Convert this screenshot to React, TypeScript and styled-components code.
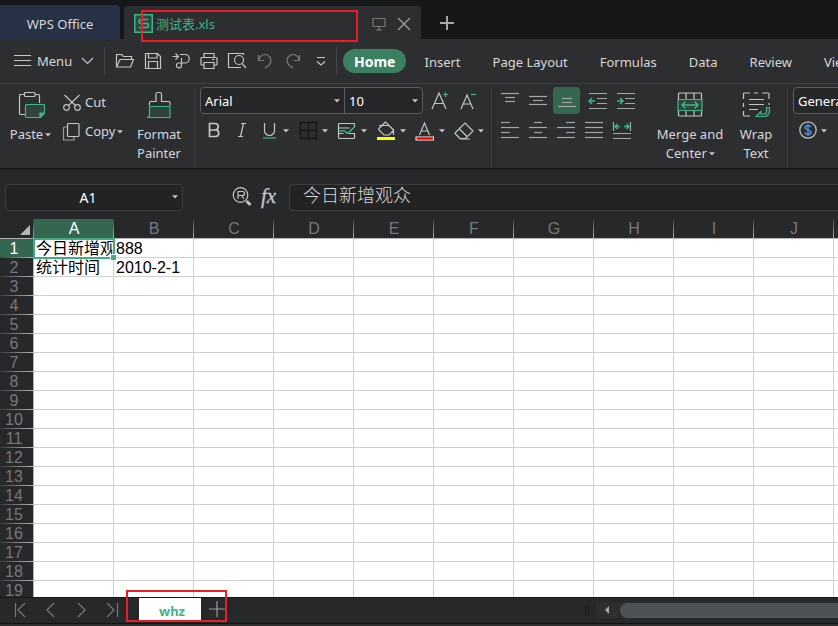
import React from "react";
import styled, { createGlobalStyle, css } from "styled-components";

const ui = `"Noto Sans", "Noto Sans CJK SC", sans-serif`;
const sheetFont = `"Liberation Sans", "Noto Sans CJK SC", sans-serif`;
const green = "#3fb488";
const ink = "#c4c5c6";
const dim = "#77787a";

const GlobalStyle = createGlobalStyle`
  *, *::before, *::after { box-sizing: border-box; }
  body { margin: 0; background: #2d2e30; font-family: ${ui}; font-size: 13px; color: #d6d7d8; overflow: hidden; }
  button, input, select { font: inherit; color: inherit; }
  svg { display: block; flex: none; fill: none; }
`;

const Page = styled.main`
  display: flex;
  flex-direction: column;
  height: 100vh;
  overflow: hidden;
`;

const buttonReset = css`
  border: 0;
  padding: 0;
  margin: 0;
  background: none;
  white-space: nowrap;
  cursor: pointer;
`;

/* ---------- title bar ---------- */
const TitleBar = styled.header`
  display: flex;
  align-items: flex-end;
  gap: 4px;
  flex: none;
  height: 39px;
  background: #161719;
`;
const OfficeTab = styled.button`
  ${buttonReset}
  width: 120px;
  height: 34px;
  border-radius: 0 4px 0 0;
  background: #263145;
  padding-top: 4px;
`;
const DocumentTab = styled.div`
  position: relative;
  display: flex;
  align-items: center;
  width: 297px;
  height: 33px;
  padding: 2px 10px 0;
  border-radius: 4px 4px 0 0;
  background: #2d2e30;
`;
const DocumentName = styled.button`
  ${buttonReset}
  display: flex;
  align-items: center;
  gap: 3px;
  flex: 1;
  color: ${green};
  font-size: 13px;
  line-height: 20px;
`;
const TabAction = styled.button`
  ${buttonReset}
  margin-left: 11px;
`;
const NewTab = styled.button`
  ${buttonReset}
  align-self: center;
  margin: 6px 0 0 15px;
`;
const Marker = styled.span<{ $inset: string }>`
  position: absolute;
  inset: ${(p) => p.$inset};
  border: 2px solid #ee1c24;
  pointer-events: none;
`;

/* ---------- menu bar ---------- */
const MenuBar = styled.nav`
  display: flex;
  align-items: center;
  flex: none;
  height: 45px;
  border-bottom: 1px solid #3f4042;
  white-space: nowrap;
`;
const MenuButton = styled.button`
  ${buttonReset}
  display: flex;
  align-items: center;
  gap: 6px;
  flex: none;
  width: 104px;
  padding-left: 13px;
`;
const Rule = styled.span<{ $tall?: boolean }>`
  flex: none;
  width: 1px;
  height: ${(p) => (p.$tall ? 80 : 28)}px;
  background: ${(p) => (p.$tall ? "#3a3b3d" : "#454648")};
`;
const QuickTools = styled.div`
  display: flex;
  flex: none;
  width: 231px;
  padding-left: 6px;
`;
const QuickButton = styled.button<{ $muted?: boolean }>`
  ${buttonReset}
  display: grid;
  place-items: center;
  width: 28px;
  height: 28px;
`;
const MenuTab = styled.button<{ $active?: boolean }>`
  ${buttonReset}
  flex: none;
  height: 24px;
  padding: 2px 16px 0;
  border-radius: 12px;
  ${(p) =>
    p.$active &&
    css`
      margin: 0 2px 0 6px;
      padding: 0 11px;
      background: #3c8064;
      color: #fff;
      font-size: 14px;
      font-weight: 700;
    `}
`;

/* ---------- ribbon ---------- */
const Ribbon = styled.section`
  display: flex;
  flex: none;
  height: 86px;
  padding-top: 3px;
  border-bottom: 2px solid #18191b;
  line-height: 19px;
`;
const Group = styled.div<{ $width?: number }>`
  display: flex;
  flex: none;
  width: ${(p) => (p.$width ? p.$width + "px" : "auto")};
`;
const LargeButton = styled.button<{ $width: number }>`
  ${buttonReset}
  display: flex;
  flex-direction: column;
  align-items: center;
  flex: none;
  width: ${(p) => p.$width}px;
  padding-top: 4px;
  line-height: 19px;
  gap: 6px;
`;
const Stack = styled.div<{ $width?: number }>`
  display: flex;
  flex-direction: column;
  flex: none;
  gap: 3px;
  width: ${(p) => (p.$width ? p.$width + "px" : "auto")};
`;
const SmallButton = styled.button`
  ${buttonReset}
  display: flex;
  align-items: center;
  gap: 3px;
  height: 26px;
  padding-top: 5px;
`;
const WithCaret = styled.span<{ $indent?: number }>`
  display: flex;
  align-items: center;
  gap: 1px;
  padding-left: ${(p) => p.$indent ?? 0}px;
`;
const Row = styled.div<{ $gap?: number; $pad?: number }>`
  display: flex;
  align-items: center;
  gap: ${(p) => p.$gap ?? 0}px;
  height: 27px;
  padding-left: ${(p) => p.$pad ?? 0}px;
`;
const SelectPair = styled.div`
  display: flex;
  width: 223px;
  height: 27px;
  border: 1px solid #5b5c5e;
  border-radius: 4px;
  background: #262729;
`;
const SelectBox = styled.label<{ $width: number; $divided?: boolean; $framed?: boolean }>`
  display: grid;
  grid-template-areas: "box";
  align-items: center;
  flex: none;
  width: ${(p) => p.$width}px;
  height: 100%;
  color: #fff;
  ${(p) => p.$divided && "border-right: 1px solid #5b5c5e;"}
  ${(p) =>
    p.$framed &&
    css`
      height: 27px;
      border: 1px solid #5b5c5e;
      border-radius: 4px;
      background: #262729;
    `}
  > svg {
    grid-area: box;
    justify-self: end;
    margin-right: 3px;
    pointer-events: none;
  }
`;
const Select = styled.select`
  grid-area: box;
  appearance: none;
  width: 100%;
  height: 100%;
  padding: 2px 4px 0;
  border: 0;
  background: transparent;
  option { color: #000; }
`;
const Tool = styled.button<{ $active?: boolean; $after?: number }>`
  ${buttonReset}
  display: grid;
  place-items: center;
  flex: none;
  width: 27px;
  height: 27px;
  margin-right: ${(p) => p.$after ?? 1}px;
  border-radius: 4px;
  background: ${(p) => (p.$active ? "#356650" : "none")};
`;
const SplitTool = styled.button`
  ${buttonReset}
  display: flex;
  align-items: center;
  flex: none;
  gap: 3px;
  width: 31px;
`;

/* ---------- formula bar ---------- */
const FormulaBar = styled.section`
  display: flex;
  align-items: center;
  flex: none;
  height: 49px;
  padding: 4px 0 0 5px;
  background: #27282a;
  border-top: 1px solid #2c2d2f;
`;
const NameBox = styled.div`
  display: grid;
  grid-template-areas: "box";
  align-items: center;
  flex: none;
  width: 178px;
  height: 27px;
  border: 1px solid #3c3d3f;
  border-radius: 4px;
  background: #232323;
  > svg { grid-area: box; justify-self: end; margin-right: 3px; }
`;
const NameInput = styled.input`
  grid-area: box;
  width: 100%;
  padding: 0 12px 0 0;
  border: 0;
  background: transparent;
  color: #fff;
  font-family: ${ui};
  font-size: 14px;
  text-align: center;
`;
const FormulaTools = styled.div`
  display: flex;
  align-items: center;
  gap: 5px;
  width: 106px;
  padding-left: 45px;
`;
const FunctionButton = styled.button`
  ${buttonReset}
  padding-bottom: 3px;
  font: italic 21px/24px "Liberation Serif", serif;
  color: ${ink};
  -webkit-text-stroke: 0.3px ${ink};
`;
const FormulaInput = styled.input`
  flex: 1;
  min-width: 0;
  height: 27px;
  padding: 0 13px 7px;
  border: 1px solid #3c3d3f;
  border-right: 0;
  border-radius: 4px 0 0 4px;
  background: #232323;
  color: #d8d8d8;
  font-family: "Noto Sans CJK SC", sans-serif;
  font-size: 18px;
  font-weight: 300;
  line-height: 20px;
`;

/* ---------- grid ---------- */
const SheetArea = styled.section`
  flex: 1;
  min-height: 0;
  overflow: hidden;
  background: #fff;
`;
const Sheet = styled.table`
  width: 914px;
  table-layout: fixed;
  border-collapse: separate;
  border-spacing: 0;
  font-family: ${sheetFont};
  font-size: 16px;
  line-height: 18px;
  color: #000;
`;
const RowHeadCol = styled.col`
  width: 34px;
`;
const Corner = styled.td`
  height: 20px;
  padding: 0;
  background: linear-gradient(#3a3b3d, #a5a5a5) right / 1px 100% no-repeat #27282a;
  border-bottom: 1px solid #b5b5b5;
  > svg { margin: 2px 4px 0 auto; }
`;
const ColumnHead = styled.th<{ $active?: boolean }>`
  height: 20px;
  padding: 1px 0 0;
  line-height: 18px;
  border-bottom: 1px solid #b5b5b5;
  background: linear-gradient(#3a3b3d, #b5b5b5) right / 1px 100% no-repeat
    ${(p) => (p.$active ? "#356650" : "#27282a")};
  color: ${(p) => (p.$active ? "#fff" : "#77787a")};
  font-weight: 400;
`;
const RowHead = styled.th<{ $active?: boolean }>`
  height: 19px;
  padding: 0 5px 0 0;
  border-right: 1px solid #b5b5b5;
  background: linear-gradient(90deg, #3a3b3d, #b5b5b5) bottom / 100% 1px no-repeat
    ${(p) => (p.$active ? "#356650" : "#27282a")};
  color: ${(p) => (p.$active ? "#fff" : "#77787a")};
  font-weight: 400;
`;
const Cell = styled.td`
  position: relative;
  height: 19px;
  padding: 0;
  border-right: 1px solid #d0d0d0;
  border-bottom: 1px solid #d0d0d0;
`;
const CellText = styled.span`
  display: block;
  height: 18px;
  padding-left: 2px;
  line-height: 20px;
  overflow: hidden;
  white-space: nowrap;
`;
const Selection = styled.span`
  position: absolute;
  inset: -1px -2px -2px -1px;
  border: 2px solid #40ad83;
  z-index: 1;
  &::after {
    content: "";
    position: absolute;
    right: -3px;
    bottom: -3px;
    width: 5px;
    height: 5px;
    background: #40ad83;
    outline: 1px solid #fff;
  }
`;

/* ---------- sheet bar ---------- */
const SheetBar = styled.footer`
  display: flex;
  align-items: stretch;
  flex: none;
  height: 27px;
  border-top: 1px solid #151617;
  border-bottom: 1px solid #111213;
  background: #27282a;
`;
const SheetNav = styled.div`
  display: flex;
  align-items: center;
  gap: 15px;
  width: 139px;
  padding: 0 0 2px 12px;
`;
const NavButton = styled.button`
  ${buttonReset}
`;
const SheetTabs = styled.div`
  position: relative;
  display: flex;
  align-items: flex-start;
`;
const SheetTab = styled.button`
  ${buttonReset}
  width: 62px;
  height: 24px;
  padding: 2px 0 0 4px;
  background: #fff;
  color: ${green};
  font-weight: 700;
  line-height: 20px;
`;
const AddSheet = styled.button`
  ${buttonReset}
  width: 26px;
  padding: 3px 0 0 8px;
`;
const Grip = styled.span`
  align-self: center;
  width: 4px;
  height: 10px;
  margin-left: 358px;
  border: 1px solid #17181a;
  border-width: 0 1px;
`;
const ScrollTrack = styled.div`
  display: flex;
  align-items: center;
  flex: 1;
  margin: 4px 0 5px 7px;
  background: #2d2e30;
`;
const ScrollLeft = styled.button`
  ${buttonReset}
  width: 24px;
  padding-left: 8px;
`;
const ScrollThumb = styled.div`
  flex: 1;
  height: 15px;
  border-radius: 8px 0 0 8px;
  background: #4e5254;
`;
const StatusEdge = styled.div`
  flex: none;
  height: 2px;
  background: #2d2e30;
`;

/* ---------- drawings ---------- */
const Svg = ({ w = 20, h = 20, children }: { w?: number; h?: number; children: React.ReactNode }) => (
  <svg width={w} height={h} viewBox={`0 0 ${w} ${h}`} stroke={ink} strokeWidth="1.2" aria-hidden="true">
    {children}
  </svg>
);
const Caret = () => (
  <svg width="8" height="8" viewBox="0 0 8 8" aria-hidden="true">
    <path d="M1 2.300h6L4 5.500z" fill={ink} />
  </svg>
);
const quick = {
  open: <path d="M1.500 16V3.500h5l2 2h8v3M1.500 16 5 8.500h13.500L15.500 16z" />,
  save: <path d="M2.500 2.500h12l3 3v12h-15zM5.500 2.500V7H14V2.500M5.500 17.500v-7h9v7" />,
  convert: <path d="M1.500 5.500H7M4.500 2.500l3 3-3 3M9 3.500h5a4 4 0 0 1 0 8.500H7.500a2.500 2.500 0 1 0 3 2.500V7" />,
  print: <path d="M5 6V2.500h10V6M5 14H3a1 1 0 0 1-1-1V7.500a1 1 0 0 1 1-1h14a1 1 0 0 1 1 1V13a1 1 0 0 1-1 1h-2M5 11.500h10v6H5zM13 8.500h2.500" />,
  preview: (
    <>
      <path d="M16.500 4V2.500h-15v14H14" />
      <circle cx="12" cy="9" r="4.500" />
      <path d="m15 12.500 4 4.500" />
    </>
  ),
};

const alignShapes: Record<string, [number, number, number][]> = {
  top: [[1, 3, 18], [5, 7, 10], [5, 11, 10]],
  middle: [[1, 6, 18], [5, 10, 10], [1, 14, 18]],
  bottom: [[5, 8, 10], [5, 12, 10], [1, 16, 18]],
  left: [[1, 2, 9], [1, 7, 18], [1, 12, 9], [1, 17, 18]],
  center: [[6, 2, 8], [1, 7, 18], [6, 12, 8], [1, 17, 18]],
  right: [[10, 2, 9], [1, 7, 18], [10, 12, 9], [1, 17, 18]],
  justify: [[1, 2, 18], [1, 7, 18], [1, 12, 18], [1, 17, 18]],
};
const Align = ({ kind }: { kind: string }) => (
  <Svg>
    {alignShapes[kind].map(([x, y, w]) => (
      <path key={y} d={`M${x} ${y - 0.5}h${w}`} stroke="#a4a5a6" />
    ))}
  </Svg>
);
const Indent = ({ right }: { right?: boolean }) => (
  <Svg>
    <path d="M1 2.500h18M9 7.500h10M9 12.500h10M1 17.500h18" stroke="#a4a5a6" />
    <path d={right ? "M1 10h5M4 7l3 3-3 3" : "M7 10H2M4 7l-3 3 3 3"} stroke={green} strokeWidth="1.500" />
  </Svg>
);

const columns = ["A", "B", "C", "D", "E", "F", "G", "H", "I", "J", "K"];
const data: Record<string, string> = { A1: "今日新增观", B1: "888", A2: "统计时间", B2: "2010-2-1" };
const rows = Array.from({ length: 19 }, (_, i) => i + 1);

export default function App() {
  return (
    <Page>
      <GlobalStyle />
      <TitleBar>
        <OfficeTab>WPS Office</OfficeTab>
        <DocumentTab>
          <DocumentName>
            <Svg w={19} h={19}>
              <rect x=".75" y=".75" width="17.500" height="17.500" fill="#2f4a40" stroke={green} strokeWidth="1.500" />
              <path d="M14 5.500H7a2 2 0 0 0 0 4h5.500a2 2 0 0 1 0 4H5" stroke={green} strokeWidth="1.500" />
            </Svg>
            <span>测试表.xls</span>
          </DocumentName>
          <TabAction aria-label="Show in window">
            <Svg w={14} h={14}>
              <path d="M1 1.500h12v8H1zM7 10v3M4 13h6" stroke={dim} />
            </Svg>
          </TabAction>
          <TabAction aria-label="Close">
            <Svg w={14} h={14}>
              <path d="m1 1 12 12M13 1 1 13" stroke="#a0a1a2" />
            </Svg>
          </TabAction>
          <Marker $inset="4px 63px -3px 17px" />
        </DocumentTab>
        <NewTab aria-label="New tab">
          <Svg w={14} h={14}>
            <path d="M7 0v14M0 7h14" stroke="#a8a9aa" strokeWidth="2" />
          </Svg>
        </NewTab>
      </TitleBar>

      <MenuBar>
        <MenuButton>
          <Svg w={18} h={14}>
            <path d="M1 1.500h17M1 6.500h17M1 11.500h17" />
          </Svg>
          Menu
          <Svg w={18} h={8}>
            <path d="m4 1 5.500 5.500L15 1" />
          </Svg>
        </MenuButton>
        <Rule />
        <QuickTools>
          <QuickButton aria-label="Open"><Svg>{quick.open}</Svg></QuickButton>
          <QuickButton aria-label="Save"><Svg>{quick.save}</Svg></QuickButton>
          <QuickButton aria-label="Convert"><Svg>{quick.convert}</Svg></QuickButton>
          <QuickButton aria-label="Print"><Svg>{quick.print}</Svg></QuickButton>
          <QuickButton aria-label="Print preview"><Svg>{quick.preview}</Svg></QuickButton>
          <QuickButton aria-label="Undo">
            <Svg><path d="M3.500 4v5.500H9M4 9a6 6 0 1 1 10 5l-4 3" stroke={dim} /></Svg>
          </QuickButton>
          <QuickButton aria-label="Redo">
            <Svg><path d="M16.500 4v5.500H11M16 9a6 6 0 1 0-10 5l4 3" stroke={dim} /></Svg>
          </QuickButton>
          <QuickButton aria-label="More tools">
            <Svg><path d="M6 6.500h8M6 10.500l4 3.500 4-3.500" /></Svg>
          </QuickButton>
        </QuickTools>
        <Rule />
        <MenuTab $active>Home</MenuTab>
        {["Insert", "Page Layout", "Formulas", "Data", "Review", "View"].map((name) => (
          <MenuTab key={name}>{name}</MenuTab>
        ))}
      </MenuBar>

      <Ribbon>
        <Group $width={194}>
          <LargeButton $width={62}>
            <Svg w={28} h={28}>
              <path d="M7 3.500H3.500a1 1 0 0 0-1 1v18a1 1 0 0 0 1 1H8M18 3.500h3.500a1 1 0 0 1 1 1V12" />
              <rect x="7.500" y="1.500" width="10.500" height="4" rx="1" />
              <path d="M9.500 13.500h17a1 1 0 0 1 1 1v8l-4 4h-14a1 1 0 0 1-1-1v-11a1 1 0 0 1 1-1z" fill="#30443c" stroke={green} />
              <path d="M27 22h-4v4z" fill={green} stroke={green} />
            </Svg>
            <WithCaret>Paste<Caret /></WithCaret>
          </LargeButton>
          <Stack $width={65}>
            <SmallButton>
              <Svg>
                <circle cx="4.500" cy="14.500" r="2.800" />
                <circle cx="15.500" cy="14.500" r="2.800" />
                <path d="m2.500 2 11 10.500M17.500 2l-11 10.500" />
              </Svg>
              Cut
            </SmallButton>
            <SmallButton>
              <Svg>
                <path d="M5.500 5H2.500a1 1 0 0 0-1 1v12h10.500v-3" stroke="#98999a" />
                <rect x="5.500" y="1.500" width="11.500" height="13" rx="1" />
              </Svg>
              <WithCaret>Copy<Caret /></WithCaret>
            </SmallButton>
          </Stack>
          <LargeButton $width={64}>
            <Svg w={28} h={28}>
              <path d="M4.500 14.500v-3a1 1 0 0 1 1-1H11V3a1.500 1.500 0 0 1 1.500-1.500h2.500A1.500 1.500 0 0 1 16.500 3v7.500H24a1 1 0 0 1 1 1v3" />
              <path d="M4.500 15.500h20.500v11H2c2 0 2.500-1 2.500-3z" fill="#30443c" stroke={green} />
            </Svg>
            <span>Format<br />Painter</span>
          </LargeButton>
        </Group>
        <Rule $tall />

        <Group $width={296}>
          <Stack>
            <Row $pad={5}>
              <SelectPair>
                <SelectBox $width={144} $divided>
                  <Select aria-label="Font" defaultValue="Arial"><option>Arial</option></Select>
                  <Caret />
                </SelectBox>
                <SelectBox $width={77}>
                  <Select aria-label="Font size" defaultValue="10"><option>10</option></Select>
                  <Caret />
                </SelectBox>
              </SelectPair>
              <Tool aria-label="Increase font size" $after={2}>
                <svg width="27" height="22" viewBox="0 0 27 22" stroke={ink} strokeWidth="1.200">
                  <path d="m9 19 7-16 7 16M11.500 13.500h9" />
                  <path d="M20 4.500h5M22.500 2v5" stroke={green} />
                </svg>
              </Tool>
              <Tool aria-label="Decrease font size">
                <svg width="27" height="22" viewBox="0 0 27 22" stroke={ink} strokeWidth="1.200">
                  <path d="m9 19 6-14 6 14M11 14h8" />
                  <path d="M19 4.500h5" stroke={green} />
                </svg>
              </Tool>
            </Row>
            <Row $pad={5}>
              <Tool aria-label="Bold">
                <Svg><path d="M5.500 2.500h5.500a3 3 0 0 1 0 6.500H5.500zM5.500 9h6a3.200 3.200 0 0 1 0 6.500h-6z" strokeWidth="1.700" /></Svg>
              </Tool>
              <Tool aria-label="Italic" $after={4}>
                <Svg><path d="M9 2.500h5M6 15.500h5M11.500 2.500l-3 13" /></Svg>
              </Tool>
              <Row $gap={8}>
                <SplitTool aria-label="Underline">
                  <Svg>
                    <path d="M5.500 2v7.500a5 5 0 0 0 10 0V2" />
                    <path d="M4 17h13" stroke="#3b7d63" strokeWidth="2" />
                  </Svg>
                  <Caret />
                </SplitTool>
                <SplitTool aria-label="Borders">
                  <Svg><path d="M2.500 1.500h16v16h-16zM10.500 1.500v16M2.500 9.500h16" stroke="#151617" strokeWidth="1.300" /></Svg>
                  <Caret />
                </SplitTool>
                <SplitTool aria-label="Cell style">
                  <Svg>
                    <path d="M17.500 6V3.500a1 1 0 0 0-1-1h-14a1 1 0 0 0-1 1v13a1 1 0 0 0 1 1h14a1 1 0 0 0 1-1V12M1.500 7h11M1.500 12.500h5M12 12.500h5.500" />
                    <path d="M1.500 10h6l3 2.500 7.500-7" stroke={green} strokeWidth="1.500" />
                  </Svg>
                  <Caret />
                </SplitTool>
                <SplitTool aria-label="Fill colour">
                  <Svg>
                    <path d="M3 4.500h9M9.500 1 3 7.500a1 1 0 0 0 0 1.500l5 5h5l4-4a1 1 0 0 0 0-1.500zM17.500 8v6" />
                    <path d="M1 17.500h18" stroke="#ffff00" strokeWidth="3" />
                  </Svg>
                  <Caret />
                </SplitTool>
                <SplitTool aria-label="Font colour">
                  <Svg>
                    <path d="m4.500 14 5-12 5 12M6.500 10h6" />
                    <path d="M.500 17.500h18.500" stroke="#fff" strokeWidth="4" />
                    <path d="M1.500 17.500h16.500" stroke="#f00" strokeWidth="2.500" />
                  </Svg>
                  <Caret />
                </SplitTool>
                <SplitTool aria-label="Clear">
                  <Svg>
                    <path d="M6 17.500 1.500 13a1 1 0 0 1 0-1.500L11 2l8 8-7.500 7.500zM5.500 8l7.500 7.500M6 18h10" />
                  </Svg>
                  <Caret />
                </SplitTool>
              </Row>
            </Row>
          </Stack>
        </Group>
        <Rule $tall />

        <Group $width={158}>
          <Stack>
            <Row $pad={4}>
              <Tool aria-label="Align top"><Align kind="top" /></Tool>
              <Tool aria-label="Align middle" $after={2}><Align kind="middle" /></Tool>
              <Tool aria-label="Align bottom" $active $after={4}><Align kind="bottom" /></Tool>
              <Tool aria-label="Decrease indent"><Indent /></Tool>
              <Tool aria-label="Increase indent"><Indent right /></Tool>
            </Row>
            <Row $pad={4}>
              <Tool aria-label="Align left"><Align kind="left" /></Tool>
              <Tool aria-label="Align centre"><Align kind="center" /></Tool>
              <Tool aria-label="Align right"><Align kind="right" /></Tool>
              <Tool aria-label="Justify"><Align kind="justify" /></Tool>
              <Tool aria-label="Distribute">
                <Svg>
                  <path d="M1.500 1v9M18.500 1v9M1 12.500h18M1 17.500h18" stroke="#a4a5a6" />
                  <path d="M8 5.500H3M5.500 3 3 5.500 5.500 8M12 5.500h5M14.500 3 17 5.500 14.500 8" stroke={green} strokeWidth="1.500" />
                </Svg>
              </Tool>
            </Row>
          </Stack>
        </Group>
        <Group $width={137}>
          <LargeButton $width={80}>
            <Svg w={28} h={28}>
              <path d="M2.500 8V3a1 1 0 0 1 1-1h21a1 1 0 0 1 1 1v5M2.500 20v4a1 1 0 0 0 1 1h21a1 1 0 0 0 1-1v-4M10 2v6M18 2v6M10 20v5M18 20v5" />
              <path d="M2 8.500h24v11H2z" fill="#30443c" stroke={green} />
              <path d="M6 14h16M9.500 10.500 6 14l3.500 3.500M18.500 10.500 22 14l-3.500 3.500" stroke={green} strokeWidth="1.500" />
            </Svg>
            <span>
              Merge and
              <WithCaret $indent={9}>Center<Caret /></WithCaret>
            </span>
          </LargeButton>
          <LargeButton $width={52}>
            <Svg w={28} h={28}>
              <path d="M1.500 8V3a1 1 0 0 1 1-1H8M12 2h4M20 2h6a1 1 0 0 1 1 1v5M1.500 12v4M1.500 20v4a1 1 0 0 0 1 1H8M7 8.500h15M7 13.500h15M7 18.500h9M27 12v2" />
              <path d="M24.500 16.500h3v4a5 5 0 0 1-5 5H14l5-5v2.500h3a2.500 2.500 0 0 0 2.500-2.500z" fill="#30443c" stroke={green} />
            </Svg>
            <span>Wrap<br />Text</span>
          </LargeButton>
        </Group>
        <Rule $tall />

        <Group>
          <Stack>
            <Row $pad={5}>
              <SelectBox $width={120} $framed>
                <Select aria-label="Number format" defaultValue="General"><option>General</option></Select>
                <Caret />
              </SelectBox>
            </Row>
            <Row $pad={11} $gap={7}>
              <SplitTool aria-label="Currency">
                <Svg w={18} h={20}>
                  <circle cx="9" cy="9" r="8.200" />
                  <path d="M12 6C11 4 6 4.300 6 6.700s6 2 6 4.500-5 2.700-6 .500M9 3v12" stroke="#4f8ee0" strokeWidth="1.500" />
                </Svg>
                <Caret />
              </SplitTool>
              <Tool aria-label="Percent">
                <Svg><circle cx="3.500" cy="5" r="2.500" /><circle cx="15" cy="15" r="2.500" /><path d="M15 2 3 18" /></Svg>
              </Tool>
            </Row>
          </Stack>
        </Group>
      </Ribbon>

      <FormulaBar>
        <NameBox>
          <NameInput aria-label="Cell name" defaultValue="A1" />
          <Caret />
        </NameBox>
        <FormulaTools>
          <QuickButton aria-label="Find value">
            <Svg>
              <circle cx="8.500" cy="8" r="7.300" />
              <path d="M6 12V4.500h4.500a2 2 0 0 1 0 4H6M9.500 8.500l2.500 3.500" />
              <path d="m14.500 14 4 4" strokeWidth="3" />
            </Svg>
          </QuickButton>
          <FunctionButton aria-label="Insert function">fx</FunctionButton>
        </FormulaTools>
        <FormulaInput aria-label="Formula" defaultValue="今日新增观众" />
      </FormulaBar>

      <SheetArea>
        <Sheet>
          <colgroup>
            <RowHeadCol />
            {columns.map((c) => <col key={c} />)}
          </colgroup>
          <thead>
            <tr>
              <Corner>
                <svg width="10" height="10" viewBox="0 0 10 10"><path d="M10 0v10H0z" fill="#b4b5b6" /></svg>
              </Corner>
              {columns.map((c) => (
                <ColumnHead key={c} scope="col" $active={c === "A"}>{c}</ColumnHead>
              ))}
            </tr>
          </thead>
          <tbody>
            {rows.map((r) => (
              <tr key={r}>
                <RowHead scope="row" $active={r === 1}>{r}</RowHead>
                {columns.map((c) => (
                  <Cell key={c}>
                    <CellText>{data[c + r]}</CellText>
                    {c + r === "A1" && <Selection />}
                  </Cell>
                ))}
              </tr>
            ))}
          </tbody>
        </Sheet>
      </SheetArea>

      <SheetBar>
        <SheetNav>
          <NavButton aria-label="First sheet"><Svg w={16} h={16}><path d="M3.500 1v14M13 1 6 8l7 7" stroke={dim} /></Svg></NavButton>
          <NavButton aria-label="Previous sheet"><Svg w={16} h={16}><path d="M11 1 4 8l7 7" stroke={dim} /></Svg></NavButton>
          <NavButton aria-label="Next sheet"><Svg w={16} h={16}><path d="m4 1 7 7-7 7" stroke={dim} /></Svg></NavButton>
          <NavButton aria-label="Last sheet"><Svg w={16} h={16}><path d="m2 1 7 7-7 7M12.500 1v14" stroke={dim} /></Svg></NavButton>
        </SheetNav>
        <SheetTabs>
          <SheetTab>whz</SheetTab>
          <AddSheet aria-label="Add sheet">
            <Svg w={16} h={16}><path d="M8 0v16M0 8h16" stroke="#98999a" /></Svg>
          </AddSheet>
          <Marker $inset="-8px 0 1px -13px" />
        </SheetTabs>
        <Grip />
        <ScrollTrack>
          <ScrollLeft aria-label="Scroll left">
            <svg width="6" height="8" viewBox="0 0 6 8"><path d="M5 0v8L1 4z" fill="#a8a9aa" /></svg>
          </ScrollLeft>
          <ScrollThumb />
        </ScrollTrack>
      </SheetBar>
      <StatusEdge />
    </Page>
  );
}
